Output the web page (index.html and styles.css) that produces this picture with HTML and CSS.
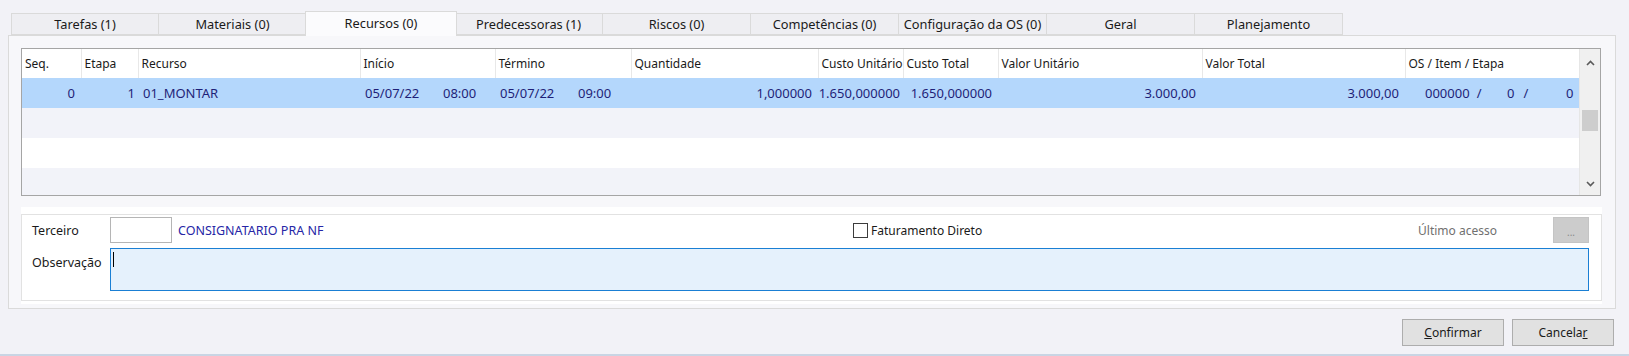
FILE: index.html
```html
<!DOCTYPE html>
<html lang="pt-BR">
<head>
	<meta charset="UTF-8">
	<title>Recursos</title>
	<link rel="stylesheet" href="styles.css">
</head>
<body>
	<div class="tabs">
		<div class="tab">Tarefas (1)</div>
		<div class="tab">Materiais (0)</div>
		<div class="tab active">Recursos (0)</div>
		<div class="tab">Predecessoras (1)</div>
		<div class="tab">Riscos (0)</div>
		<div class="tab">Competências (0)</div>
		<div class="tab">Configuração da OS (0)</div>
		<div class="tab">Geral</div>
		<div class="tab">Planejamento</div>
	</div>

	<div class="panel">
		<div class="grid">
			<table class="grid-table">
				<colgroup>
					<col style="width:59px"><col style="width:57px"><col style="width:222px">
					<col style="width:135px"><col style="width:136px"><col style="width:187px">
					<col style="width:85px"><col style="width:95px"><col style="width:204px">
					<col style="width:203px"><col style="width:174px">
				</colgroup>
				<thead>
					<tr>
						<th>Seq.</th><th>Etapa</th><th>Recurso</th><th>Início</th><th>Término</th>
						<th>Quantidade</th><th>Custo Unitário</th><th>Custo Total</th>
						<th>Valor Unitário</th><th>Valor Total</th><th>OS / Item / Etapa</th>
					</tr>
				</thead>
				<tbody>
					<tr class="selected">
						<td class="num">0</td>
						<td class="num tight">1</td>
						<td>01_MONTAR</td>
						<td><span class="date">05/07/22</span><span class="time">08:00</span></td>
						<td><span class="date">05/07/22</span><span class="time">09:00</span></td>
						<td class="num">1,000000</td>
						<td class="num narrow">1.650,000000</td>
						<td class="num">1.650,000000</td>
						<td class="num">3.000,00</td>
						<td class="num">3.000,00</td>
						<td class="os"><span class="os-a">000000</span><span class="sep">/</span><span class="os-b">0</span><span class="sep wide">/</span><span class="os-c">0</span></td>
					</tr>
					<tr class="odd"><td colspan="11"></td></tr>
					<tr><td colspan="11"></td></tr>
					<tr class="odd last"><td colspan="11"></td></tr>
				</tbody>
			</table>
			<div class="vscroll">
				<span class="arrow">
					<svg width="9" height="6" viewBox="0 0 9 6"><polyline points="1,5 4.5,1.5 8,5" fill="none" stroke="#5a5a5a" stroke-width="1.6"/></svg>
				</span>
				<span class="gap"></span>
				<span class="thumb"></span>
				<span class="track"></span>
				<span class="arrow down">
					<svg width="9" height="6" viewBox="0 0 9 6"><polyline points="1,1 4.5,4.5 8,1" fill="none" stroke="#5a5a5a" stroke-width="1.6"/></svg>
				</span>
			</div>
		</div>

		<div class="info">
			<div class="info-box">
				<div class="row">
					<span class="label">Terceiro</span>
					<span class="field small"></span>
					<span class="name">CONSIGNATARIO PRA NF</span>
					<span class="check"></span>
					<span class="check-label">Faturamento Direto</span>
					<span class="spacer"></span>
					<span class="muted">Último acesso</span>
					<span class="dots">...</span>
				</div>
				<div class="row obs">
					<span class="label">Observação</span>
					<div class="memo"><span class="caret"></span></div>
				</div>
			</div>
		</div>
	</div>

	<div class="actions">
		<button class="btn"><u>C</u>onfirmar</button>
		<button class="btn">Cancela<u>r</u></button>
	</div>
	<div class="statusline"></div>
</body>
</html>
```

FILE: styles.css
```css
html,body{margin:0;padding:0;}
body{background:#f2f2f7;font-family:"Noto Sans","Open Sans",sans-serif;font-size:12px;color:#1a1a1a;width:1629px;height:356px;overflow:hidden;}

/* abas */
.tabs{display:flex;padding:13px 0 0 11px;height:22px;position:relative;z-index:1;}
.tab{box-sizing:border-box;width:148px;height:22px;line-height:20px;text-align:center;font-size:12.8px;background:#eeeef2;border:1px solid #dadada;border-left:none;color:#1a1a1a;}
.tab:first-child{border-left:1px solid #dadada;}
.tab.active{width:152px;height:25px;margin:-2px -2px 0 -2px;line-height:22px;background:#fbfbfd;border:1px solid #dadada;border-bottom:none;position:relative;}

/* painel da aba */
.panel{margin:0 13px 0 8px;border:1px solid #dadada;background:#f7f7fa;padding:12px 13px 4px 12px;}

.grid{display:flex;border:1px solid #a5a5a5;margin-right:1px;height:146px;background:#fff;overflow:hidden;}
.grid-table{border-collapse:collapse;table-layout:fixed;width:1557px;}
.grid-table th{height:29px;padding:0 0 0 3px;text-align:left;font-weight:normal;font-size:12px;background:#fff;border-right:1px solid #e8e8e8;white-space:nowrap;overflow:hidden;}
.grid-table th:last-child{border-right:none;}
.grid-table td{height:30px;padding:0 6px 0 5px;font-size:13px;white-space:nowrap;overflow:hidden;}
.grid-table tr.odd td{background:#f2f3f9;}
.grid-table tr.last td{height:27px;}
.grid-table tr.selected td{background:#b4d7fc;color:#1f1f78;}
.grid-table td.num{text-align:right;}
.grid-table td.tight{padding-right:3px;}
.grid-table td.narrow{padding:0 3px 0 0;}
.date{display:inline-block;width:78px;}
.time{display:inline-block;}
.grid-table td.os{padding:0 5px 0 20px;}
.os-a{display:inline-block;}
.sep{display:inline-block;margin-left:7px;}
.sep.wide{margin-left:9px;}
.os-b{display:inline-block;width:33px;text-align:right;}
.os-c{display:inline-block;width:45px;text-align:right;}

.vscroll{width:21px;display:flex;flex-direction:column;background:#f0f0f0;border-left:1px solid #e6e6e6;}
.vscroll .arrow{height:28px;display:flex;align-items:center;justify-content:center;}
.vscroll .arrow.down{height:22px;}
.vscroll .gap{height:33px;}
.vscroll .thumb{height:21px;margin:0 2px;background:#cdcdcd;}
.vscroll .track{flex:1;}

/* dados do terceiro */
.info{margin-top:11px;background:#fff;padding:7px 0 3px 0;}
.info-box{border:1px solid #e2e2e2;padding:2px 12px 9px 88px;}
.row{display:flex;align-items:center;height:26px;}
.label{width:78px;margin-left:-78px;font-size:12.5px;}
.field.small{box-sizing:border-box;width:62px;height:26px;border:1px solid #b5b5b5;background:#fff;}
.name{width:675px;margin-left:6px;color:#2626a6;font-size:12.5px;}
.check{box-sizing:border-box;width:15px;height:15px;border:1px solid #3c3c3c;background:#fff;margin-right:3px;}
.check-label{font-size:12px;}
.spacer{flex:1;}
.muted{color:#707070;font-size:12px;margin-right:56px;}
.dots{box-sizing:border-box;width:36px;height:26px;background:#cccccc;border:1px solid #c4c4c4;color:#8a8a8a;text-align:center;line-height:28px;font-size:10px;}
.row.obs{height:43px;margin-top:5px;align-items:flex-start;}
.row.obs .label{padding-top:6px;}
.memo{flex:1;box-sizing:border-box;height:43px;border:1px solid #1a7fd4;background:#e5f1fc;padding:3px 2px;}
.caret{display:block;width:1px;height:15px;background:#000;}

/* botoes */
.actions{display:flex;justify-content:flex-end;gap:8px;margin:10px 15px 0 0;}
.btn{box-sizing:border-box;width:102px;height:27px;background:#e1e1e1;border:1px solid #adadad;font-family:"Noto Sans","Open Sans",sans-serif;font-size:12px;color:#1a1a1a;padding:0;}
.statusline{margin-top:8px;height:2px;background:#c9d5e4;}
```
